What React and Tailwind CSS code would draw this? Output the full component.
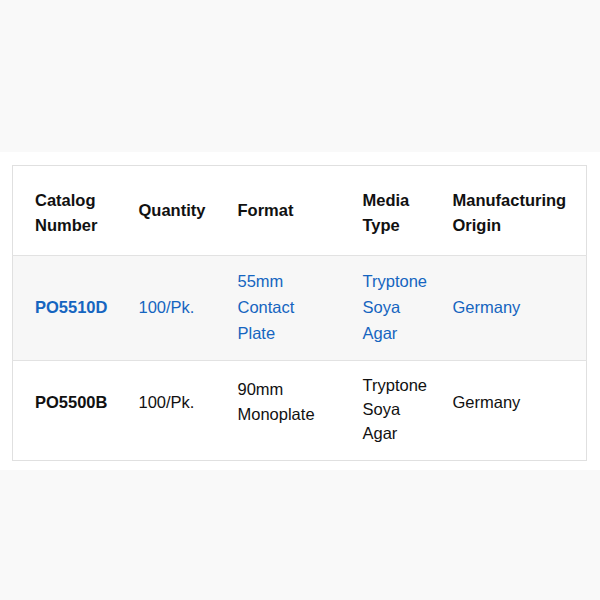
import React from 'react';

const rows = [
  {
    catalog: 'PO5510D',
    quantity: '100/Pk.',
    format: ['55mm', 'Contact', 'Plate'],
    media: ['Tryptone', 'Soya', 'Agar'],
    origin: 'Germany',
    active: true,
  },
  {
    catalog: 'PO5500B',
    quantity: '100/Pk.',
    format: ['90mm', 'Monoplate'],
    media: ['Tryptone', 'Soya', 'Agar'],
    origin: 'Germany',
    active: false,
  },
];

const Lines = ({ items }) => (
  <>
    {items.map((t) => (
      <div key={t}>{t}</div>
    ))}
  </>
);

export default function App() {
  return (
    <div className="min-h-[600px] bg-[#f9f9f9] font-['Liberation_Sans',Arial,sans-serif] text-[16.5px] text-[#111]">
      <div className="h-[152px]" />
      <div className="bg-white pt-[13px] pb-[9px] pl-[12px]">
        <table className="w-[575px] table-fixed border-collapse border border-[#e0e0e0]">
          <colgroup>
            <col className="w-[104px]" />
            <col className="w-[99px]" />
            <col className="w-[125px]" />
            <col className="w-[90px]" />
            <col />
          </colgroup>
          <thead>
            <tr className="h-[90px] border-b border-[#e2e2e2] text-left font-bold leading-[25px]">
              <th className="pl-[22px] pt-[4px] align-middle">
                <div>Catalog</div>
                <div>Number</div>
              </th>
              <th className="pl-[22px] align-middle">Quantity</th>
              <th className="pl-[22px] align-middle">Format</th>
              <th className="pl-[22px] pt-[4px] align-middle">
                <div>Media</div>
                <div>Type</div>
              </th>
              <th className="pl-[22px] pt-[4px] align-middle">
                <div>Manufacturing</div>
                <div>Origin</div>
              </th>
            </tr>
          </thead>
          <tbody>
            {rows.map((r) =>
              r.active ? (
                <tr
                  key={r.catalog}
                  className="h-[105px] border-b border-[#e2e2e2] bg-[#f7f7f7] text-[#1565c0] leading-[26px]"
                >
                  <td className="pl-[22px] pb-[2px] align-middle font-bold">{r.catalog}</td>
                  <td className="pl-[22px] pb-[2px] align-middle">{r.quantity}</td>
                  <td className="pl-[22px] pb-[2px] align-middle">
                    <Lines items={r.format} />
                  </td>
                  <td className="pl-[22px] pb-[2px] align-middle">
                    <Lines items={r.media} />
                  </td>
                  <td className="pl-[22px] pb-[2px] align-middle">{r.origin}</td>
                </tr>
              ) : (
                <tr key={r.catalog} className="h-[100px] bg-white leading-[24px]">
                  <td className="pl-[22px] pb-[18px] align-middle font-bold">{r.catalog}</td>
                  <td className="pl-[22px] pb-[18px] align-middle">{r.quantity}</td>
                  <td className="pl-[22px] pb-[18px] align-middle leading-[25px]">
                    <Lines items={r.format} />
                  </td>
                  <td className="pl-[22px] pb-[4px] align-middle">
                    <Lines items={r.media} />
                  </td>
                  <td className="pl-[22px] pb-[18px] align-middle">{r.origin}</td>
                </tr>
              )
            )}
          </tbody>
        </table>
      </div>
    </div>
  );
}
